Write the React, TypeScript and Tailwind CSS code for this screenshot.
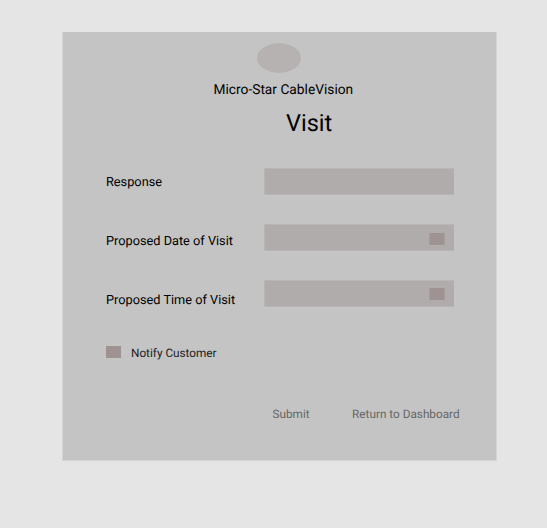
import React from "react";

function Field({ label, labelClass, pickerClass, className }: { label: string; labelClass: string; pickerClass?: string; className: string }) {
  return (
    <div className={"flex h-[27px] " + className}>
      <label className={"w-[158px] text-[12.75px] leading-[17px] whitespace-nowrap " + labelClass}>{label}</label>
      <div className="flex h-[27px] w-[190px] items-start justify-end border-y border-l border-[#b8b6b5] bg-[#b0acab] pr-[9px]">
        {pickerClass && <span className={"h-3 w-4 border-x border-[#a69e9d] bg-[#9e9392] " + pickerClass} />}
      </div>
    </div>
  );
}

export default function App() {
  return (
    <div className="h-[528px] w-[547px] bg-[#e5e5e5] pt-8 pl-[62px] font-[Roboto,sans-serif] text-black [text-rendering:geometricPrecision]">
      <main className="flex h-[429px] w-[435px] flex-col border-x border-b border-[#d4d4d4] bg-[#c4c4c4] pt-[11px] pl-[43px]">
        <div className="ml-[151px] h-[30px] w-[44px] shrink-0 rounded-[50%] bg-[#b6b2b1]" />
        <p className="mt-[9px] ml-[107.5px] text-[13.75px] leading-4">Micro-Star CableVision</p>
        <h1 className="mt-[11px] ml-[180px] text-[23.55px] leading-7">Visit</h1>
        <Field label="Response" labelClass="pt-[6px]" className="mt-[31px]" />
        <Field label="Proposed Date of Visit" labelClass="pt-[9px]" pickerClass="mt-[8px]" className="mt-[29px]" />
        <Field label="Proposed Time of Visit" labelClass="pt-[12px]" pickerClass="mt-[7px]" className="mt-[29px]" />
        <div className="mt-[38px] flex items-start gap-[10px] text-[11.77px] leading-[14px] text-[#222]">
          <span className="mt-px h-3 w-[15px] bg-[#9e9392]" />
          <span className="pt-px">Notify Customer</span>
        </div>
        <div className="mt-[47px] ml-[166.5px] flex gap-[42.5px] text-[11.77px] leading-[14px] whitespace-nowrap text-[#666]">
          <span>Submit</span>
          <span>Return to Dashboard</span>
        </div>
      </main>
    </div>
  );
}
